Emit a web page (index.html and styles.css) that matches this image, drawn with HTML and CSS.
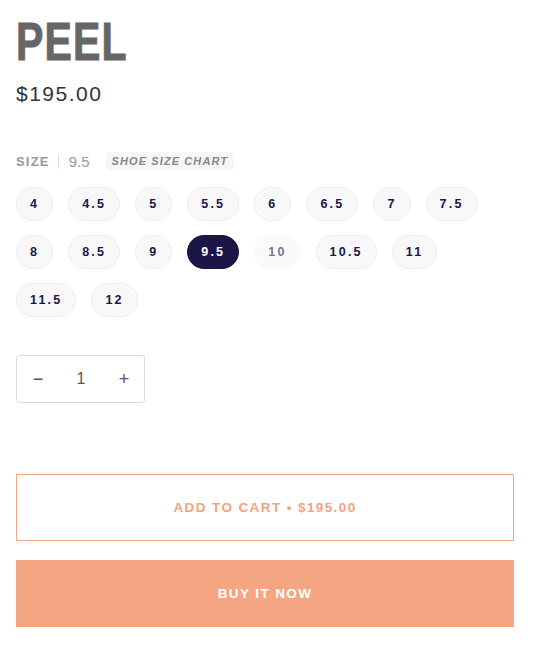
FILE: index.html
```html
<!DOCTYPE html>
<html lang="en">
<head>
    <meta charset="UTF-8">
    <meta name="viewport" content="width=device-width, initial-scale=1.0">
    <title>Peel</title>
    <link rel="stylesheet" href="styles.css">
</head>
<body>
    <div class="product">
        <h1 class="title">Peel</h1>
        <div class="price">$195.00</div>

        <div class="size-head">
            <span class="size-label">Size</span>
            <span class="size-value">9.5</span>
            <a class="size-chart">Shoe size chart</a>
        </div>

        <ul class="sizes">
            <li class="size">4</li>
            <li class="size">4.5</li>
            <li class="size">5</li>
            <li class="size">5.5</li>
            <li class="size">6</li>
            <li class="size">6.5</li>
            <li class="size">7</li>
            <li class="size">7.5</li>
            <li class="size">8</li>
            <li class="size">8.5</li>
            <li class="size">9</li>
            <li class="size active">9.5</li>
            <li class="size soldout">10</li>
            <li class="size">10.5</li>
            <li class="size">11</li>
            <li class="size">11.5</li>
            <li class="size">12</li>
        </ul>

        <div class="qty">
            <button class="qty-btn">&minus;</button>
            <span class="qty-num">1</span>
            <button class="qty-btn">+</button>
        </div>

        <button class="btn btn-cart">Add to cart &bull; $195.00</button>
        <button class="btn btn-buy">Buy it now</button>
    </div>
</body>
</html>
```

FILE: styles.css
```css
* {
    margin: 0;
    padding: 0;
    box-sizing: border-box;
}
body {
    font-family: "Liberation Sans", Arial, sans-serif;
    background: #fff;
    color: #333;
}
.product {
    width: 498px;
    margin-left: 16px;
    padding-top: 15px;
}
.title {
    display: inline-block;
    font-size: 54px;
    font-weight: bold;
    text-transform: uppercase;
    color: #666;
    line-height: 52px;
    letter-spacing: 1.5px;
    -webkit-text-stroke: 1px #666;
    transform: scaleX(0.76);
    transform-origin: left center;
}
.price {
    margin-top: 15px;
    font-size: 21px;
    letter-spacing: 1.5px;
    color: #333;
}
.size-head {
    display: flex;
    align-items: center;
    margin-top: 45px;
    height: 20px;
}
.size-label {
    font-size: 13px;
    font-weight: bold;
    letter-spacing: 1.2px;
    text-transform: uppercase;
    color: #999;
    padding-right: 8px;
    border-right: 1px solid #ddd;
}
.size-value {
    font-size: 15px;
    color: #999;
    margin-left: 10px;
}
.size-chart {
    margin-left: 16px;
    background: #f6f6f6;
    border-radius: 3px;
    padding: 3px 6px;
    font-size: 11px;
    font-weight: bold;
    font-style: italic;
    letter-spacing: 1.1px;
    text-transform: uppercase;
    color: #888;
}
.sizes {
    list-style: none;
    display: flex;
    flex-wrap: wrap;
    gap: 14px 15px;
    margin-top: 16px;
    width: 470px;
}
.size {
    height: 34px;
    padding: 0 13px;
    border: 1px solid #eee;
    border-radius: 17px;
    background: #f8f8f8;
    color: #1c1548;
    font-size: 12.5px;
    font-weight: bold;
    letter-spacing: 2.2px;
    display: flex;
    align-items: center;
    justify-content: center;
    min-width: 36px;
}
.size.active {
    background: #1c1548;
    border-color: #1c1548;
    color: #fff;
}
.size.soldout {
    background: #fafafa;
    border-color: #fafafa;
    color: #7a7690;
}
.qty {
    display: flex;
    align-items: center;
    justify-content: space-between;
    width: 129px;
    height: 48px;
    margin-top: 38px;
    border: 1px solid #ddd;
    border-radius: 3px;
    padding: 0 13px 0 14px;
}
.qty-btn {
    border: none;
    background: none;
    font-family: inherit;
    font-size: 18px;
    color: #555;
    width: 14px;
}
.qty-num {
    font-size: 16px;
    color: #555;
}
.btn {
    display: block;
    width: 100%;
    height: 67px;
    font-family: inherit;
    font-size: 13.5px;
    font-weight: bold;
    letter-spacing: 1.4px;
    text-transform: uppercase;
    cursor: pointer;
}
.btn-cart {
    margin-top: 71px;
    background: #fff;
    border: 1px solid #f4a582;
    color: #f3a37f;
}
.btn-buy {
    margin-top: 19px;
    background: #f4a683;
    border: none;
    color: #fff;
}
```
